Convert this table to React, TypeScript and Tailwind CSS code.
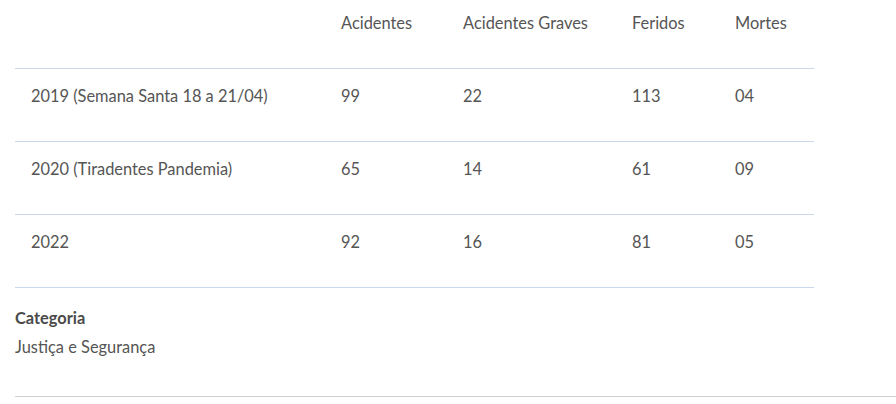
const rows = [
  { label: "2019 (Semana Santa 18 a 21/04)", acidentes: "99", graves: "22", feridos: "113", mortes: "04" },
  { label: "2020 (Tiradentes Pandemia)", acidentes: "65", graves: "14", feridos: "61", mortes: "09" },
  { label: "2022", acidentes: "92", graves: "16", feridos: "81", mortes: "05" },
];

const headers = ["Acidentes", "Acidentes Graves", "Feridos", "Mortes"];

export default function App() {
  return (
    <div className="w-[896px] h-[404px] bg-white font-['Lato','Open_Sans',sans-serif] text-[16.4px] text-[#555] overflow-hidden">
      <div className="pl-[15px]">
        <table className="w-[799px] border-collapse table-fixed">
          <colgroup>
            <col className="w-[310px]" />
            <col className="w-[122px]" />
            <col className="w-[169px]" />
            <col className="w-[103px]" />
            <col className="w-[95px]" />
          </colgroup>
          <thead>
            <tr className="h-[68px] border-b border-[#c9d8ea]">
              <th className="px-4 pt-[11px] align-top text-left font-normal leading-6"></th>
              {headers.map((h) => (
                <th key={h} className="px-4 pt-[11px] align-top text-left font-normal leading-6 whitespace-nowrap">
                  {h}
                </th>
              ))}
            </tr>
          </thead>
          <tbody>
            {rows.map((r) => (
              <tr key={r.label} className="h-[73px] border-b border-[#c9d8ea]">
                <td className="px-4 pt-[15px] align-top leading-6 whitespace-nowrap">{r.label}</td>
                <td className="px-4 pt-[15px] align-top leading-6">{r.acidentes}</td>
                <td className="px-4 pt-[15px] align-top leading-6">{r.graves}</td>
                <td className="px-4 pt-[15px] align-top leading-6">{r.feridos}</td>
                <td className="px-4 pt-[15px] align-top leading-6">{r.mortes}</td>
              </tr>
            ))}
          </tbody>
        </table>
        <div className="pt-[18px] pb-[37px] border-b border-[#cfcfcf]">
          <div className="font-bold text-[#4a4a4a] leading-6">Categoria</div>
          <div className="mt-[5px] leading-6">Justiça e Segurança</div>
        </div>
      </div>
    </div>
  );
}
